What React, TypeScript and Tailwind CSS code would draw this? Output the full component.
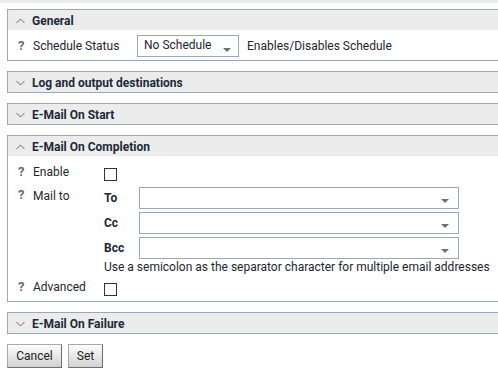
import { ReactNode } from "react";

const FONT = { fontFamily: "Roboto, 'Liberation Sans', sans-serif" };

function Chevron({ open }: { open: boolean }) {
  return (
    <svg width="9" height="6" viewBox="0 0 9 6" className="shrink-0">
      <polyline
        points={open ? "0.5,5 4.5,1 8.5,5" : "0.5,1 4.5,5 8.5,1"}
        fill="none"
        stroke="#6b6b6b"
        strokeWidth="1"
      />
    </svg>
  );
}

function DropArrow() {
  return (
    <svg width="8" height="4" viewBox="0 0 8 4" className="shrink-0">
      <polygon points="0,0 8,0 4,4" fill="#6f6f6f" />
    </svg>
  );
}

function Panel({
  title,
  open = false,
  children,
}: {
  title: string;
  open?: boolean;
  children?: ReactNode;
}) {
  return (
    <div className="mb-[10px] w-[560px] border border-[#9aa8bc]">
      <div className="flex h-[20px] items-center gap-[7px] bg-[#ececec] pl-[8px] pt-[1px]">
        <Chevron open={open} />
        <span className="text-[12px] font-bold text-[#1c2a3a]">{title}</span>
      </div>
      {open ? children : null}
    </div>
  );
}

function Help() {
  return (
    <span className="w-[25px] shrink-0 pl-[10px] text-[13px] font-bold leading-4 text-[#6a6a6a]">
      ?
    </span>
  );
}

function Checkbox() {
  return <span className="mt-[4px] block h-[13px] w-[13px] border border-[#333] bg-white" />;
}

function ComboInput() {
  return (
    <div className="flex h-[22px] w-[320px] items-end justify-end border border-[#9aa8bc] bg-white pb-[5px] pr-[9px]">
      <DropArrow />
    </div>
  );
}

export default function App() {
  const mailRows = ["To", "Cc", "Bcc"];

  return (
    <div className="h-[392px] w-[498px] overflow-hidden bg-white text-[#1f2430]" style={FONT}>
      <div className="h-[3px] bg-[#ececec]" />
      <div className="pl-[7px] pt-[6px]">
        <Panel title="General" open>
          <div className="flex items-center pb-[3px] pt-[5px]">
            <Help />
            <span className="w-[104px] text-[12px] leading-4">Schedule Status</span>
            <div className="flex h-[22px] w-[102px] items-end justify-between border border-[#9aa8bc] bg-white pb-[4px] pl-[6px] pr-[7px]">
              <span className="mb-[-1px] self-center text-[12px] leading-4">No Schedule</span>
              <DropArrow />
            </div>
            <span className="ml-[8px] text-[12px] leading-4">Enables/Disables Schedule</span>
          </div>
        </Panel>

        <Panel title="Log and output destinations" />
        <Panel title="E-Mail On Start" />

        <Panel title="E-Mail On Completion" open>
          <div className="pb-[5px] pt-[8px] text-[12px]">
            <div className="flex items-start">
              <Help />
              <span className="w-[71px] leading-4">Enable</span>
              <Checkbox />
            </div>

            <div className="mt-[6px] flex items-start">
              <Help />
              <span className="mt-[1px] w-[71px] leading-4">Mail to</span>
              <div>
                <div className="flex flex-col gap-[3px]">
                  {mailRows.map((label) => (
                    <div key={label} className="flex items-center">
                      <span className="w-[35px] font-bold leading-4">{label}</span>
                      <ComboInput />
                    </div>
                  ))}
                </div>
                <p className="whitespace-nowrap leading-4">
                  Use a semicolon as the separator character for multiple email addresses
                </p>
              </div>
            </div>

            <div className="mt-[4px] flex items-start">
              <Help />
              <span className="w-[71px] leading-4">Advanced</span>
              <Checkbox />
            </div>
          </div>
        </Panel>

        <Panel title="E-Mail On Failure" />

        <div className="flex gap-[6px]">
          <button
            type="button"
            className="h-[24px] w-[55px] border border-[#a8a8a8] border-b-[#6e6e6e] border-r-[#6e6e6e] bg-gradient-to-b from-[#fdfdfd] to-[#d2d2d2] text-[12px] text-[#222]"
          >
            Cancel
          </button>
          <button
            type="button"
            className="h-[24px] w-[35px] border border-[#a8a8a8] border-b-[#6e6e6e] border-r-[#6e6e6e] bg-gradient-to-b from-[#fdfdfd] to-[#d2d2d2] text-[12px] text-[#222]"
          >
            Set
          </button>
        </div>
      </div>
    </div>
  );
}
